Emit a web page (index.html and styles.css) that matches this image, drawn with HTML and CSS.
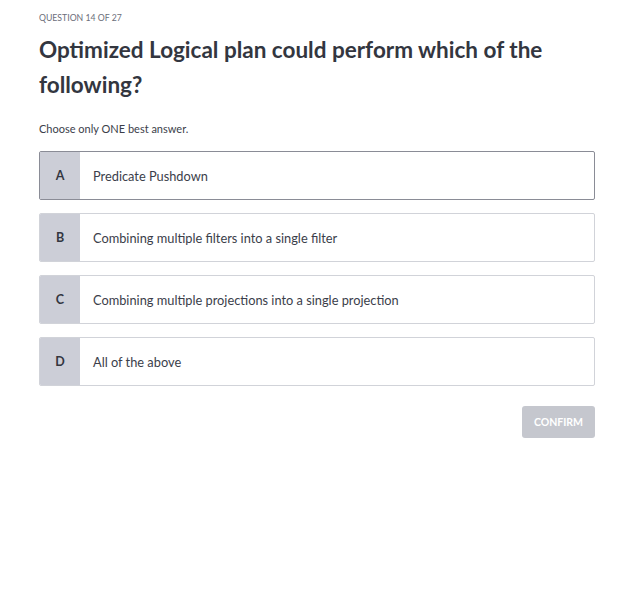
FILE: index.html
```html
<!DOCTYPE html>
<html>
<head>
<meta charset="utf-8">
<link rel="stylesheet" href="styles.css">
</head>
<body>
<div class="quiz">
  <div class="counter">QUESTION 14 OF 27</div>
  <h1 class="title">Optimized Logical plan could perform which of the following?</h1>
  <p class="hint">Choose only ONE best answer.</p>
  <div class="options">
    <div class="option active"><span class="letter">A</span><span class="text">Predicate Pushdown</span></div>
    <div class="option"><span class="letter">B</span><span class="text">Combining multiple filters into a single filter</span></div>
    <div class="option"><span class="letter">C</span><span class="text">Combining multiple projections into a single projection</span></div>
    <div class="option"><span class="letter">D</span><span class="text">All of the above</span></div>
  </div>
  <div class="actions"><button class="confirm">CONFIRM</button></div>
</div>
</body>
</html>
```
FILE: styles.css
```css
* { box-sizing: border-box; }
html, body { margin: 0; padding: 0; background: #fff; }
body { font-family: Lato, "Open Sans", sans-serif; color: #3b3e4a; }
.quiz { width: 556px; margin-left: 39px; padding-top: 12px; }
.counter { font-size: 8.7px; color: #6b6e7a; line-height: 12px; }
.title { margin: 8px 0 0; font-size: 22.5px; line-height: 35px; font-weight: 700; color: #33363f; }
.hint { margin: 20px 0 0; font-size: 11px; line-height: 14px; color: #3b3e4a; }
.options { margin-top: 15px; display: flex; flex-direction: column; gap: 13px; }
.option { display: flex; height: 49px; border: 1px solid #d1d3d9; border-radius: 2px; background: #fff; overflow: hidden; }
.option.active { border-color: #8a8c96; }
.letter { width: 40px; flex: none; background: #ccced7; display: flex; align-items: center; justify-content: center; font-size: 12.5px; font-weight: 700; color: #33363f; }
.text { display: flex; align-items: center; padding-left: 13px; font-size: 12.8px; color: #3b3e4a; }
.actions { display: flex; justify-content: flex-end; margin-top: 20px; }
.confirm { width: 73px; height: 32px; border: none; border-radius: 3px; background: #c5c7ce; color: #fff; font-family: inherit; font-size: 10.5px; font-weight: 700; padding: 0; }
```
